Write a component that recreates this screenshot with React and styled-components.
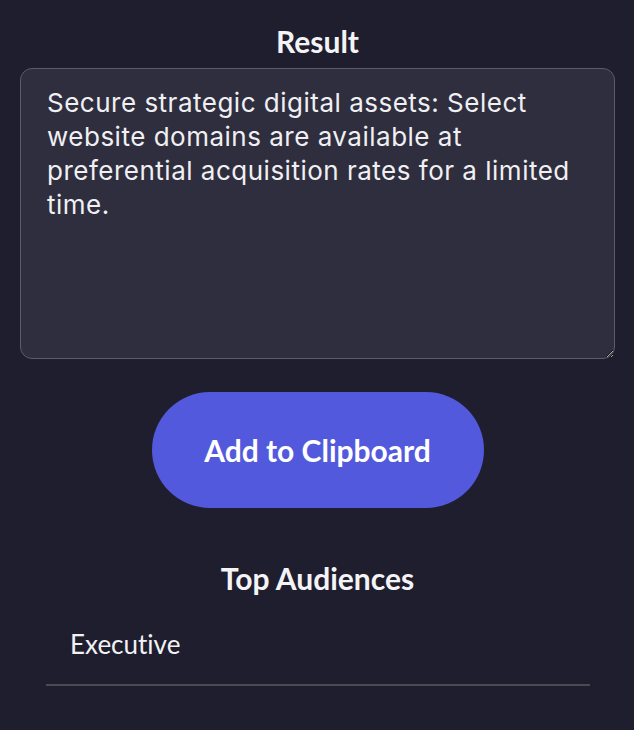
import React from "react";
import styled, { createGlobalStyle } from "styled-components";

const GlobalStyle = createGlobalStyle`
    html, body {
        margin: 0;
        padding: 0;
        background-color: #1f1e2e;
    }
    * {
        box-sizing: border-box;
    }
`;

const Page = styled.div`
    display: flex;
    flex-direction: column;
    align-items: center;
    padding: 23px 19px 40px 20px;
    min-height: 730px;
    background-color: #1f1e2e;
    color: #f2f2f4;
    font-variant-ligatures: none;
`;

const Title = styled.h2`
    margin: 0;
    font-family: Lato, "Liberation Sans", sans-serif;
    font-weight: 700;
    font-size: 30px;
    line-height: 36px;
    color: #f4f4f6;
`;

const ResultArea = styled.textarea`
    width: 100%;
    height: 291px;
    margin-top: 9px;
    padding: 17px 26px;
    background-color: #2f2e3f;
    border: 1.5px solid #5c5c62;
    border-radius: 12px;
    color: #f0f0f2;
    font-family: Inter, "Liberation Sans", sans-serif;
    font-size: 26px;
    line-height: 34px;
    letter-spacing: 0.5px;
    outline: none;
    resize: vertical;
`;

const CopyButton = styled.button`
    width: 332px;
    height: 116px;
    margin-top: 33px;
    border: none;
    border-radius: 58px;
    background-color: #5359dc;
    color: #ffffff;
    font-family: Lato, "Liberation Sans", sans-serif;
    font-weight: 700;
    font-size: 30px;
    font-variant-ligatures: none;
    cursor: pointer;
`;

const SectionTitle = styled(Title)`
    margin-top: 52px;
`;

const AudienceList = styled.ul`
    list-style: none;
    margin: 32px 0 0 26px;
    padding: 0;
    width: 544px;
    align-self: flex-start;
`;

const AudienceItem = styled.li`
    padding: 0 24px 24px;
    border-bottom: 2px solid #4a4a4f;
    font-family: Lato, "Liberation Sans", sans-serif;
    font-size: 26px;
    line-height: 32px;
    color: #f2f2f4;
`;

const audiences = ["Executive"];

const App = () => (
    <>
        <GlobalStyle />
        <Page>
            <Title>Result</Title>
            <ResultArea
                defaultValue="Secure strategic digital assets: Select website domains are available at preferential acquisition rates for a limited time."
            />
            <CopyButton>Add to Clipboard</CopyButton>
            <SectionTitle>Top Audiences</SectionTitle>
            <AudienceList>
                {audiences.map((a) => (
                    <AudienceItem key={a}>{a}</AudienceItem>
                ))}
            </AudienceList>
        </Page>
    </>
);

export default App;
